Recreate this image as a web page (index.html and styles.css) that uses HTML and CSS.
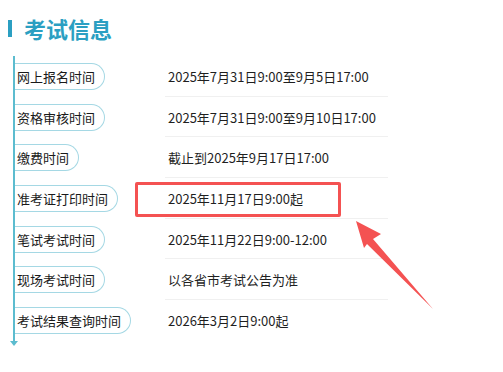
FILE: index.html
```html
<!DOCTYPE html>
<html lang="zh-CN">
<head>
  <meta charset="UTF-8">
  <meta name="viewport" content="width=device-width, initial-scale=1.0">
  <title>考试信息</title>
  <link rel="stylesheet" href="styles.css">
</head>
<body>
  <div class="page">
    <h2 class="title">考试信息</h2>

    <div class="timeline">
      <div class="row"><span class="pill">网上报名时间</span><span class="value">2025年7月31日9:00至9月5日17:00</span></div>
      <div class="row"><span class="pill">资格审核时间</span><span class="value">2025年7月31日9:00至9月10日17:00</span></div>
      <div class="row"><span class="pill">缴费时间</span><span class="value">截止到2025年9月17日17:00</span></div>
      <div class="row"><span class="pill">准考证打印时间</span><span class="value">2025年11月17日9:00起</span></div>
      <div class="row"><span class="pill">笔试考试时间</span><span class="value">2025年11月22日9:00-12:00</span></div>
      <div class="row"><span class="pill">现场考试时间</span><span class="value">以各省市考试公告为准</span></div>
      <div class="row"><span class="pill">考试结果查询时间</span><span class="value last">2026年3月2日9:00起</span></div>
    </div>

    <!-- highlight over the admission ticket row -->
    <div class="mark"></div>
    <svg class="pointer" width="90" height="100" viewBox="0 0 90 100">
      <polygon points="6,6 31,19 23,24 83,94 17,29 14,33" fill="#f45252"/>
    </svg>
  </div>
</body>
</html>
```

FILE: styles.css
```css
body {
  margin: 0;
  background: #fff;
  font-family: "Noto Sans CJK SC", "Noto Sans", sans-serif;
}
.page {
  position: relative;
  width: 503px;
  height: 372px;
}
.title {
  display: flex;
  align-items: center;
  gap: 12px;
  margin: 0;
  padding: 10px 0 0 8px;
  height: 46px;
  box-sizing: border-box;
  font-size: 22px;
  line-height: 24px;
  font-weight: bold;
  color: #2b9fc2;
}
.title::before {
  content: "";
  width: 4px;
  height: 17px;
  background: #2b9fc2;
}
.timeline {
  position: relative;
  margin: 10px 0 0 13px;
  border-left: 2px solid #5cbccf;
  width: 375px;
}
.timeline::after {
  content: "";
  position: absolute;
  left: -5px;
  bottom: -5px;
  border-left: 4px solid transparent;
  border-right: 4px solid transparent;
  border-top: 5px solid #5cbccf;
}
.row {
  display: grid;
  grid-template-columns: 150px 223px;
  align-items: center;
  height: 40.7px;
}
.pill {
  justify-self: start;
  height: 27px;
  line-height: 26px;
  box-sizing: border-box;
  padding: 0 9px 0 2px;
  border: 1.5px solid #a5d8e4;
  border-left: none;
  border-radius: 0 14px 14px 0;
  font-size: 13px;
  color: #1a1a1a;
}
.value {
  height: 40.7px;
  line-height: 42px;
  box-sizing: border-box;
  padding-left: 3px;
  border-bottom: 1px solid #f0f0f0;
  font-size: 13px;
  color: #1f1f1f;
  white-space: nowrap;
}
.value.last {
  border-bottom: none;
}
.mark {
  position: absolute;
  left: 135px;
  top: 182px;
  width: 206px;
  height: 35px;
  box-sizing: border-box;
  border: 3px solid #f45252;
  border-radius: 2px;
}
.pointer {
  position: absolute;
  left: 350px;
  top: 215px;
}
```
